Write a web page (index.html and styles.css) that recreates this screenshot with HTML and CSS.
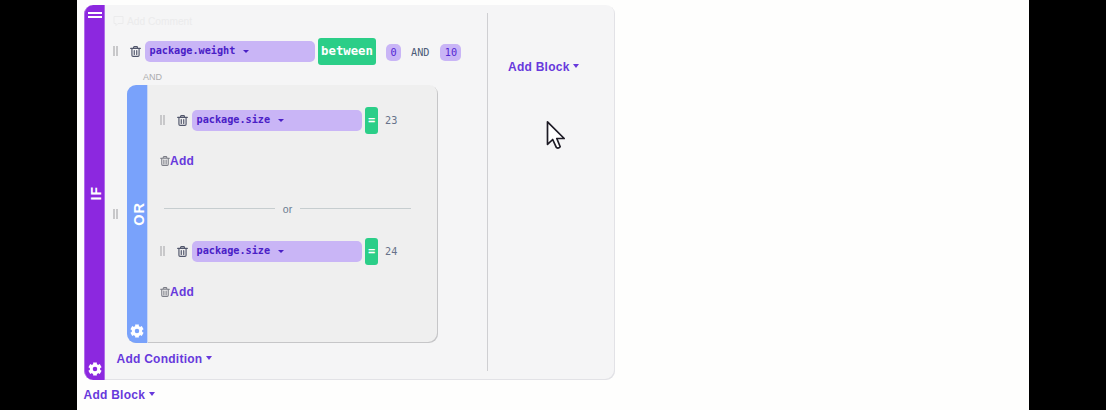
FILE: index.html
```html
<!DOCTYPE html>
<html lang="en">
<head>
<meta charset="utf-8">
<title>Rule builder</title>
<link rel="stylesheet" href="styles.css">
</head>
<body>
<svg class="defs" width="0" height="0">
  <symbol id="trash" viewBox="0 0 16 16"><path d="M1 3.500h14M5.200 3.200V2a1 1 0 0 1 1-1h3.600a1 1 0 0 1 1 1v1.200M2.800 4v9.300a1.700 1.700 0 0 0 1.700 1.700h7a1.700 1.700 0 0 0 1.700-1.700V4M6.200 6.500v5.700M9.800 6.500v5.700" fill="none" stroke="currentColor" stroke-width="1.700" stroke-linecap="round"/></symbol>
  <symbol id="gear" viewBox="0 0 16 16"><path fill="none" stroke="currentColor" stroke-width="4.200" d="M8 0.500v4M8 11.500v4M1.500 4.250l3.500 2M11 9.750l3.500 2M1.500 11.750l3.500-2M11 6.250l3.500-2"/><circle cx="8" cy="8" r="4.300" fill="none" stroke="currentColor" stroke-width="3.400"/></symbol>
</svg>
<main class="canvas">
  <section class="block">
    <div class="rail rail-if">
      <span class="menu"></span>
      <span class="rail-label">IF</span>
      <svg class="gear"><use href="#gear"/></svg>
    </div>
    <div class="conditions">
      <div class="comment">
        <svg width="11" height="10" viewBox="0 0 11 10"><path d="M1 .5h9v7H5L3 9.500V7.500H1z" fill="none" stroke="currentColor"/></svg>
        <span>Add Comment</span>
      </div>
      <div class="row">
        <i class="grip"></i>
        <svg class="trash"><use href="#trash"/></svg>
        <span class="field">package.weight<b class="caret"></b></span>
        <span class="operator between">between</span>
        <span class="chip">0</span>
        <span class="word">AND</span>
        <span class="chip">10</span>
      </div>
      <div class="joiner">AND</div>
      <div class="nested">
        <i class="grip"></i>
        <div class="group">
          <div class="rail rail-or">
            <span class="rail-label">OR</span>
            <svg class="gear"><use href="#gear"/></svg>
          </div>
          <div class="alternatives">
            <div class="row">
              <i class="grip"></i>
              <svg class="trash"><use href="#trash"/></svg>
              <span class="field">package.size<b class="caret"></b></span>
              <span class="operator">=</span>
              <span class="value">23</span>
            </div>
            <div class="add"><svg class="trash-small"><use href="#trash"/></svg><span class="link">Add</span></div>
            <div class="or-line"><span>or</span></div>
            <div class="row">
              <i class="grip"></i>
              <svg class="trash"><use href="#trash"/></svg>
              <span class="field">package.size<b class="caret"></b></span>
              <span class="operator">=</span>
              <span class="value">24</span>
            </div>
            <div class="add"><svg class="trash-small"><use href="#trash"/></svg><span class="link">Add</span></div>
          </div>
        </div>
      </div>
      <div class="link add-condition">Add Condition<b class="caret"></b></div>
    </div>
    <div class="actions">
      <div class="link">Add Block<b class="caret"></b></div>
    </div>
  </section>
  <div class="link add-block">Add Block<b class="caret"></b></div>
  <svg class="cursor" viewBox="0 0 20 30"><path d="M1.500 1.800V24.300L6.700 19.500L10.300 27.300Q12.200 29 14.200 26.800L10.800 18.500H18.200Z" fill="#fff" stroke="#1d1b25" stroke-width="1.700" stroke-linejoin="round"/></svg>
</main>
</body>
</html>
```
FILE: styles.css
```css
* { box-sizing: border-box; }
body {
  margin: 0;
  height: 410px;
  padding: 0 77px;
  background: #000;
  font-family: "Liberation Sans", Arial, sans-serif;
  overflow: hidden;
}
svg { display: block; flex: none; }
.defs { position: absolute; }
.canvas { position: relative; height: 410px; padding: 5px 0 0 7px; background: #fefefd; }

.block {
  display: flex;
  width: 531px;
  height: 375px;
  border-radius: 9px;
  background: #f5f5f6;
  box-shadow: inset -1px -1px 0 #e2e2e6;
}

.rail { display: flex; flex-direction: column; align-items: center; flex: none; color: #fff; }
.rail-if { width: 21px; padding: 7px 0 4px; border-radius: 9px 0 0 9px; background: #8c28df; border: solid #b06be9; border-width: 0 1px; justify-content: space-between; }
.rail-or { width: 21px; padding: 117px 0 5px; border-radius: 9px 0 0 9px; background: #79a2fb; border-right: 1px solid #c9d7f4; justify-content: space-between; }
.menu { width: 14px; height: 6px; border: solid #fff; border-width: 2px 0; }
.rail-label { writing-mode: vertical-rl; transform: rotate(180deg); font-weight: bold; font-size: 14.5px; line-height: 16px; letter-spacing: 1px; }
.rail-if .rail-label { font-size: 14px; margin: 6px 0 0 3px; }
.rail-or .rail-label { margin-left: 3px; }
.gear { width: 14px; height: 14px; }

.conditions { width: 382px; padding-left: 8px; }
.comment { display: flex; gap: 3px; height: 32px; padding-top: 11px; color: #ebebec; font-size: 10.2px; line-height: 11px; }
.row { display: flex; align-items: center; height: 28px; font-family: "DejaVu Sans Mono", monospace; }
.grip { flex: none; width: 5px; height: 10px; border: solid #c8c8ca; border-width: 0 2px; }
.trash { width: 11px; height: 11px; margin: 0 4px 0 12px; color: #51566b; }
.field {
  display: flex;
  align-items: center;
  width: 170px;
  height: 21px;
  padding-left: 4.5px;
  border-radius: 5px;
  background: #c9b5f6;
  color: #4a20c6;
  font-weight: bold;
  font-size: 10.2px;
  line-height: 20px;
}
.caret { display: inline-block; flex: none; margin-left: 8px; border: solid transparent; border-width: 3px 3px 0; border-top-color: currentColor; }
.operator {
  display: grid;
  place-items: center;
  width: 13px;
  height: 27px;
  margin-left: 3px;
  border-radius: 3px;
  background: #2bce88;
  color: #fff;
  font-weight: bold;
  font-size: 12px;
}
.between { width: 58px; font-size: 12.3px; }
.chip, .word, .value { color: #67728a; font-size: 10.2px; }
.chip { display: flex; justify-content: center; width: 15px; height: 17px; margin: 2px 0 0 10px; border-radius: 5px; background: #c9b5f6; color: #5427d3; line-height: 18px; }
.chip:last-child { width: 21px; margin-left: 11px; }
.word { margin: 2px 0 0 10px; color: #4c5b78; }
.joiner { height: 20px; padding: 7px 0 0 30px; color: #acacae; font-size: 9px; line-height: 11px; }

.nested { display: flex; align-items: center; }
.group { display: flex; width: 311px; height: 258px; margin-left: 9px; border-radius: 9px; background: #efefef; box-shadow: inset -1px -1px 0 #c6c6c8; }
.alternatives { flex: 1; padding: 21px 27px 0 12px; }
.value { margin-left: 7px; }
.add { display: flex; align-items: center; gap: 0; height: 16px; margin-top: 19px; }
.trash-small { width: 10px; height: 10px; margin-left: -.5px; color: #7b7d86; }
.add .link { margin-left: .5px; }
.or-line { display: flex; align-items: center; gap: 8px; height: 15px; margin: 32px 0 21px 4px; color: #6c7c91; font-size: 10.5px; line-height: 12px; }
.or-line::before, .or-line::after { content: ""; flex: 1; height: 1px; background: #c6cdcf; }

.link { color: #6739dc; font-weight: bold; font-size: 12px; line-height: 16px; letter-spacing: .25px; white-space: nowrap; }
.link .caret { margin-left: 3.5px; border-width: 4px 3.5px 0; vertical-align: 3px; }
.add-condition { margin: 8px 0 0 3.5px; }
.actions { height: 358px; margin-top: 8px; padding: 46px 0 0 20px; border-left: 1px solid #cfcfd2; }
.add-block { margin: 7px 0 0 -.5px; }
.cursor { position: absolute; left: 469px; top: 120px; width: 20px; height: 30px; }
```
